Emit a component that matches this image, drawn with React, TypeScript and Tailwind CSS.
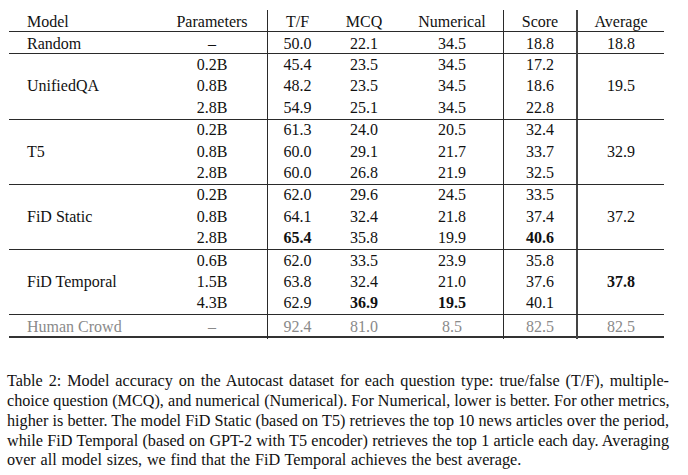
import React from "react";

type Row = {
  params: string;
  vals: [string, string, string, string];
  bold?: boolean[];
};

type Group = {
  model: string;
  avg: string;
  avgBold?: boolean;
  rows: Row[];
};

const groups: Group[] = [
  {
    model: "UnifiedQA",
    avg: "19.5",
    rows: [
      { params: "0.2B", vals: ["45.4", "23.5", "34.5", "17.2"] },
      { params: "0.8B", vals: ["48.2", "23.5", "34.5", "18.6"] },
      { params: "2.8B", vals: ["54.9", "25.1", "34.5", "22.8"] },
    ],
  },
  {
    model: "T5",
    avg: "32.9",
    rows: [
      { params: "0.2B", vals: ["61.3", "24.0", "20.5", "32.4"] },
      { params: "0.8B", vals: ["60.0", "29.1", "21.7", "33.7"] },
      { params: "2.8B", vals: ["60.0", "26.8", "21.9", "32.5"] },
    ],
  },
  {
    model: "FiD Static",
    avg: "37.2",
    rows: [
      { params: "0.2B", vals: ["62.0", "29.6", "24.5", "33.5"] },
      { params: "0.8B", vals: ["64.1", "32.4", "21.8", "37.4"] },
      { params: "2.8B", vals: ["65.4", "35.8", "19.9", "40.6"], bold: [true, false, false, true] },
    ],
  },
  {
    model: "FiD Temporal",
    avg: "37.8",
    avgBold: true,
    rows: [
      { params: "0.6B", vals: ["62.0", "33.5", "23.9", "35.8"] },
      { params: "1.5B", vals: ["63.8", "32.4", "21.0", "37.6"] },
      { params: "4.3B", vals: ["62.9", "36.9", "19.5", "40.1"], bold: [false, true, true, false] },
    ],
  },
];

// column grid shared by every band of the table
const cols = "grid grid-cols-[148px_110px_60px_74px_102px_73px_88px]";
const vl = "border-l border-[#2a2a2a]";
const vl2 = "border-l-2 border-[#444]";

const SingleRow = ({
  cells,
  className = "",
}: {
  cells: string[];
  className?: string;
}) => (
  <div className={`${cols} h-[21.4px] items-center ${className}`}>
    <div className="pl-[18px]">{cells[0]}</div>
    <div className="text-center">{cells[1]}</div>
    <div className={`text-center h-full flex items-center justify-center ${vl}`}>{cells[2]}</div>
    <div className="text-center">{cells[3]}</div>
    <div className="text-center">{cells[4]}</div>
    <div className={`text-center h-full flex items-center justify-center ${vl}`}>{cells[5]}</div>
    <div className={`text-center h-full flex items-center justify-center ${vl2}`}>{cells[6]}</div>
  </div>
);

const GroupBand = ({ g }: { g: Group }) => (
  <div className={`${cols} grid-rows-[repeat(3,21.4px)] border-t border-[#2a2a2a]`}>
    <div className="row-span-3 col-start-1 row-start-1 flex items-center pl-[18px]">{g.model}</div>
    {g.rows.map((r, i) => (
      <React.Fragment key={i}>
        <div
          className="flex items-center justify-center"
          style={{ gridColumnStart: 2, gridRowStart: i + 1 }}
        >
          {r.params}
        </div>
        {r.vals.map((v, j) => (
          <div
            key={j}
            className={`flex items-center justify-center ${j === 0 || j === 3 ? vl : ""} ${
              r.bold && r.bold[j] ? "font-bold" : ""
            }`}
            style={{ gridColumnStart: j + 3, gridRowStart: i + 1 }}
          >
            {v}
          </div>
        ))}
      </React.Fragment>
    ))}
    <div
      className={`row-span-3 col-start-7 row-start-1 flex items-center justify-center ${vl2} ${
        g.avgBold ? "font-bold" : ""
      }`}
    >
      {g.avg}
    </div>
  </div>
);

export default function App() {
  return (
    <div className="w-[688px] h-[475px] bg-white text-[#111] font-['Liberation_Serif',serif] text-[16px] overflow-hidden">
      <div className="ml-[9px] mt-[10px] w-[655px]">
        {/* header */}
        <div className={`${cols} h-[22px] items-center border-b border-[#2a2a2a]`}>
          <div className="pl-[18px]">Model</div>
          <div className="text-center">Parameters</div>
          <div className={`text-center h-full flex items-center justify-center ${vl}`}>T/F</div>
          <div className="text-center">MCQ</div>
          <div className="text-center">Numerical</div>
          <div className={`text-center h-full flex items-center justify-center ${vl}`}>Score</div>
          <div className={`text-center h-full flex items-center justify-center ${vl2}`}>Average</div>
        </div>

        <SingleRow cells={["Random", "–", "50.0", "22.1", "34.5", "18.8", "18.8"]} />

        {groups.map((g) => (
          <GroupBand key={g.model} g={g} />
        ))}

        <div className="border-t border-[#2a2a2a] border-b-2 border-b-[#333]">
          <SingleRow
            className="text-[#8a8a8a]"
            cells={["Human Crowd", "–", "92.4", "81.0", "8.5", "82.5", "82.5"]}
          />
        </div>
      </div>

      {/* caption */}
      <div className="ml-[7px] mt-[34px] w-[662px] leading-[19.75px] text-[16.2px]">
        <span className="block whitespace-nowrap text-justify [text-align-last:justify]">
          Table 2: Model accuracy on the Autocast dataset for each question type: true/false (T/F), multiple-
        </span>
        <span className="block whitespace-nowrap text-justify [text-align-last:justify]">
          choice question (MCQ), and numerical (Numerical). For Numerical, lower is better. For other metrics,
        </span>
        <span className="block whitespace-nowrap text-justify [text-align-last:justify]">
          higher is better. The model FiD Static (based on T5) retrieves the top 10 news articles over the period,
        </span>
        <span className="block whitespace-nowrap text-justify [text-align-last:justify]">
          while FiD Temporal (based on GPT-2 with T5 encoder) retrieves the top 1 article each day. Averaging
        </span>
        <span className="block whitespace-nowrap [word-spacing:0.7px]">
          over all model sizes, we find that the FiD Temporal achieves the best average.
        </span>
      </div>
    </div>
  );
}
